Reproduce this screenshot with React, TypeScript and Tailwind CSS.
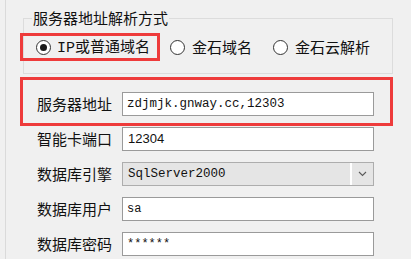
import React from "react";

const cjk = "font-['Noto_Sans_CJK_SC','Noto_Sans',sans-serif]";
const mono = "font-['Liberation_Mono','Noto_Sans_CJK_SC',monospace]";

const Radio = ({ checked = false }: { checked?: boolean }) => (
  <span className="w-[15px] h-[15px] shrink-0 rounded-full border border-[#333333] bg-white flex items-center justify-center">
    {checked && <span className="w-[7px] h-[7px] rounded-full bg-[#1a1a1a]" />}
  </span>
);

const Field = ({
  label,
  children,
}: {
  label: string;
  children: React.ReactNode;
}) => (
  <div className="flex items-center h-[24px]">
    <span className="w-[75px] text-[15px] leading-[18px] text-[#111] whitespace-nowrap">
      {label}
    </span>
    <div className="ml-[10px] w-[252px] h-full">{children}</div>
  </div>
);

const TextBox = ({ value, className = "" }: { value: string; className?: string }) => (
  <div
    className={`w-full h-full bg-white border border-[#9a9a9a] flex items-center text-[#111] whitespace-nowrap overflow-hidden ${className}`}
  >
    {value}
  </div>
);

export default function App() {
  return (
    <div className={`w-[411px] h-[259px] bg-[#f0f0f0] overflow-hidden pl-[5px] ${cjk}`}>
      <div className="h-full border-l border-[#dadada] pl-[14px] pt-[18px]">
        <div className="w-[373px]">
          {/* Address parse mode group */}
          <div className="ml-[3px] w-[370px] h-[56px] border border-[#dcdcdc] relative">
            <span className="absolute left-[8px] top-[-10px] px-[1px] bg-[#f0f0f0] text-[15px] leading-[18px] text-[#111]">
              服务器地址解析方式
            </span>
            <div className="flex items-center mt-[14px] -ml-[4px]">
              <div className="w-[140px] h-[28px] border-[3px] border-[#ee3b3b] flex items-center pl-[13px] gap-[6px]">
                <Radio checked />
                <span className="text-[15px] leading-[18px] text-[#111] whitespace-nowrap">
                  <span className={mono}>IP</span>或普通域名
                </span>
              </div>
              <div className="flex items-center gap-[7px] ml-[10px]">
                <Radio />
                <span className="text-[15px] leading-[18px] text-[#111]">金石域名</span>
              </div>
              <div className="flex items-center gap-[7px] ml-[21px]">
                <Radio />
                <span className="text-[15px] leading-[18px] text-[#111]">金石云解析</span>
              </div>
            </div>
          </div>

          {/* Highlighted server address */}
          <div className="mt-[3px] w-[373px] h-[49px] border-[3px] border-[#ee3b3b] pl-[14px] pt-[12px]">
            <Field label="服务器地址">
              <TextBox value="zdjmjk.gnway.cc,12303" className={`${mono} text-[12.5px] pl-[4px]`} />
            </Field>
          </div>

          <div className="mt-[1px] pl-[17px] flex flex-col gap-[11px]">
            <Field label="智能卡端口">
              <TextBox value="12304" className="font-['Liberation_Sans',sans-serif] text-[13px] pl-[5px]" />
            </Field>
            <Field label="数据库引擎">
              <div className="w-full h-full bg-[#e5e5e5] border border-[#adadad] flex items-center">
                <span className={`${mono} text-[12.5px] text-[#111] pl-[5px] flex-1`}>SqlServer2000</span>
                <span className="w-[2px] h-full bg-white" />
                <span className="w-[21px] h-full flex items-center justify-center">
                  <svg width="9" height="6" viewBox="0 0 9 6" fill="none">
                    <path d="M1 1l3.5 3.5L8 1" stroke="#5a5a5a" strokeWidth="1.1" />
                  </svg>
                </span>
              </div>
            </Field>
            <Field label="数据库用户">
              <TextBox value="sa" className={`${mono} text-[12px] pl-[4px]`} />
            </Field>
            <Field label="数据库密码">
              <TextBox value="******" className={`${mono} text-[12px] pl-[4px]`} />
            </Field>
          </div>
        </div>
      </div>
    </div>
  );
}
